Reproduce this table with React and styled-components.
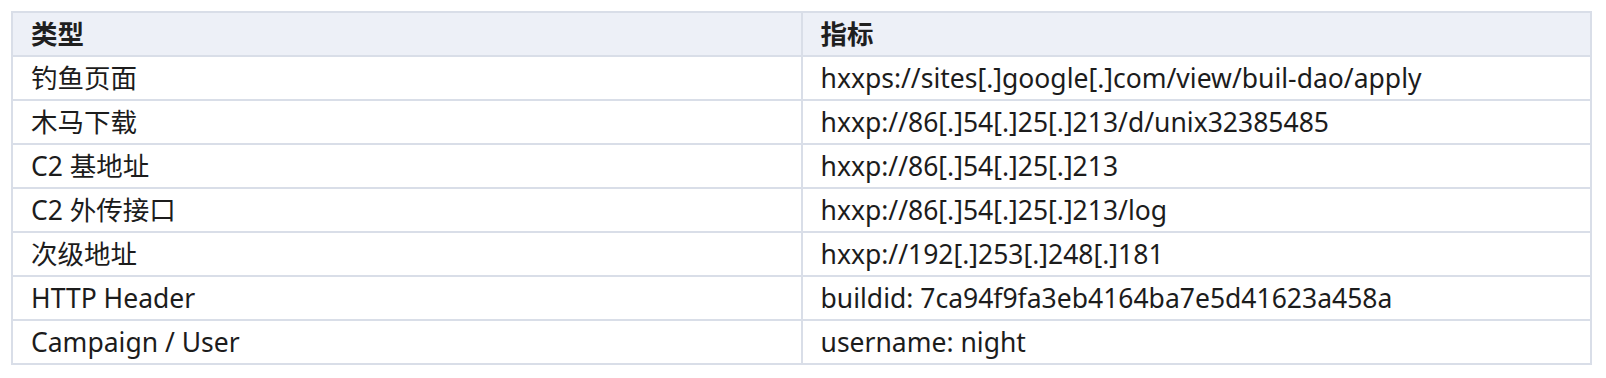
import React from 'react'
import styled, { createGlobalStyle } from 'styled-components'

const GlobalStyle = createGlobalStyle`
  html, body {
    margin: 0;
    padding: 0;
    background: #ffffff;
  }
  body {
    font-family: "Noto Sans", "Noto Sans CJK SC", sans-serif;
    color: #1c1c1c;
  }
`

const rows = [
  ['钓鱼页面', 'hxxps://sites[.]google[.]com/view/buil-dao/apply'],
  ['木马下载', 'hxxp://86[.]54[.]25[.]213/d/unix32385485'],
  ['C2 基地址', 'hxxp://86[.]54[.]25[.]213'],
  ['C2 外传接口', 'hxxp://86[.]54[.]25[.]213/log'],
  ['次级地址', 'hxxp://192[.]253[.]248[.]181'],
  ['HTTP Header', 'buildid: 7ca94f9fa3eb4164ba7e5d41623a458a'],
  ['Campaign / User', 'username: night'],
]

const Page = styled.div`
  padding: 11px 14px 13px 11px;
`

const Table = styled.table`
  width: 100%;
  border-collapse: collapse;
  table-layout: fixed;
  border: 2px solid #d9dee8;
  font-size: 26.5px;
`

const Th = styled.th`
  background: #edf0f7;
  text-align: left;
  font-weight: 700;
  color: #1f1f1f;
  height: 42px;
  padding: 0 18px;
  border: 2px solid #d9dee8;
  line-height: 1;
`

const Td = styled.td`
  height: 42px;
  padding: 0 18px;
  border: 2px solid #d9dee8;
  line-height: 1;
  white-space: nowrap;
`

export default function App() {
  return (
    <Page>
      <GlobalStyle />
      <Table>
        <thead>
          <tr>
            <Th>类型</Th>
            <Th>指标</Th>
          </tr>
        </thead>
        <tbody>
          {rows.map(([type, value]) => (
            <tr key={type}>
              <Td>{type}</Td>
              <Td>{value}</Td>
            </tr>
          ))}
        </tbody>
      </Table>
    </Page>
  )
}
